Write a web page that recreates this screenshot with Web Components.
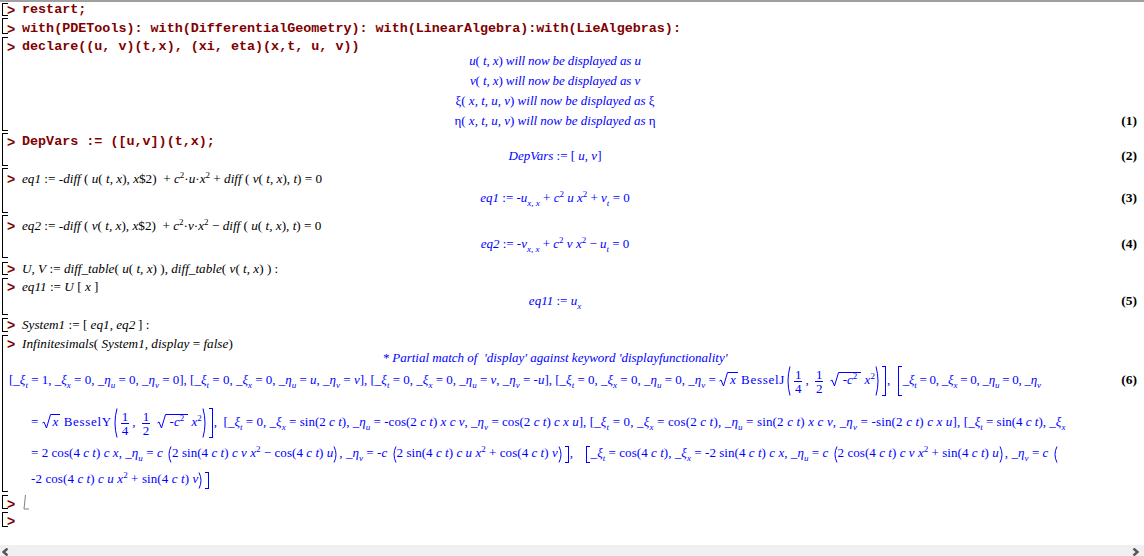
<!DOCTYPE html>
<html>
<head>
<meta charset="utf-8">
<style>
	html, body { margin: 0; height: 100%; overflow: hidden; background: #fff; }
	i { font-style: italic; }
	sub, sup { font-size: 9px; line-height: 0; }
	sub { vertical-align: -4px; }
	sup { vertical-align: 5px; }
	.fn { letter-spacing: .7px; }
</style>
</head>
<body>
<maple-sheet>
	<exec-group style="--top:1px;--h:13px;--pad:0px">
		<input-line code>restart;</input-line>
	</exec-group>
	<exec-group style="--top:2px;--h:16px;--pad:4px">
		<input-line code>with(PDETools): with(DifferentialGeometry): with(LinearAlgebra):with(LieAlgebras):</input-line>
	</exec-group>
	<exec-group style="--top:3px;--h:94px;--pad:3px">
		<input-line code>declare((u, v)(t,x), (xi, eta)(x,t, u, v))</input-line>
		<output-line style="margin-top:-3px;--ls:-.1px"><i>u</i>( <i>t, x</i>) <i>will now be displayed as u</i></output-line>
		<output-line style="--ls:-.1px"><i>v</i>( <i>t, x</i>) <i>will now be displayed as v</i></output-line>
		<output-line>ξ( <i>x, t, u, v</i>) <i>will now be displayed as</i> ξ</output-line>
		<output-line num="(1)">η( <i>x, t, u, v</i>) <i>will now be displayed as</i> η</output-line>
	</exec-group>
	<exec-group style="--top:2px;--h:33px;--pad:2px">
		<input-line code>DepVars := ([u,v])(t,x);</input-line>
		<output-line style="margin-top:-3px" num="(2)"><i>DepVars</i> := [ <i>u, v</i>]</output-line>
	</exec-group>
	<exec-group style="--top:2px;--h:45px;--pad:4px">
		<input-line><i>eq1</i> := -<i>diff</i> ( <i>u</i>( <i>t, x</i>), <i>x</i>$2) &nbsp;+ <i>c</i><sup>2</sup>·<i>u</i>·<i>x</i><sup>2</sup> + <i>diff</i> ( <i>v</i>( <i>t, x</i>), <i>t</i>) = 0</input-line>
		<output-line style="margin-top:2px" num="(3)"><i>eq1</i> := -<i>u</i><sub><i>x, x</i></sub> + <i>c</i><sup>2</sup> <i>u x</i><sup>2</sup> + <i>v</i><sub><i>t</i></sub> = 0</output-line>
	</exec-group>
	<exec-group style="--top:2px;--h:43px;--pad:4px">
		<input-line><i>eq2</i> := -<i>diff</i> ( <i>v</i>( <i>t, x</i>), <i>x</i>$2) &nbsp;+ <i>c</i><sup>2</sup>·<i>v</i>·<i>x</i><sup>2</sup> − <i>diff</i> ( <i>u</i>( <i>t, x</i>), <i>t</i>) = 0</input-line>
		<output-line style="margin-top:1px" num="(4)"><i>eq2</i> := -<i>v</i><sub><i>x, x</i></sub> + <i>c</i><sup>2</sup> <i>v x</i><sup>2</sup> − <i>u</i><sub><i>t</i></sub> = 0</output-line>
	</exec-group>
	<exec-group style="--top:4px;--h:13px;--pad:0px">
		<input-line><i>U, V</i> := <i>diff_table</i>( <i>u</i>( <i>t, x</i>) ), <i>diff_table</i>( <i>v</i>( <i>t, x</i>) ) :</input-line>
	</exec-group>
	<exec-group style="--top:3px;--h:37px;--pad:2px">
		<input-line><i>eq11</i> := <i>U</i> [ <i>x</i> ]</input-line>
		<output-line style="margin-top:-3px" num="(5)"><i>eq11</i> := <i>u</i><sub><i>x</i></sub></output-line>
	</exec-group>
	<exec-group style="--top:3px;--h:14px;--pad:0px">
		<input-line><i>System1</i> := [ <i>eq1, eq2</i>&thinsp;] :</input-line>
	</exec-group>
	<exec-group style="--top:3px;--h:157px;--pad:2px">
		<input-line><i>Infinitesimals</i>( <i>System1, display</i> = <i>false</i>)</input-line>
		<output-line style="margin-top:-3px"><i>* Partial match of &nbsp;'display' against keyword 'displayfunctionality'</i></output-line>
		<output-line wide num="(6)" style="margin-top:-3px;--row:30px;--indent:6px">[<m-sym s="ξ" i="t"></m-sym> = 1, <m-sym s="ξ" i="x"></m-sym> = 0, <m-sym s="η" i="u"></m-sym> = 0, <m-sym s="η" i="v"></m-sym> = 0], [<m-sym s="ξ" i="t"></m-sym> = 0, <m-sym s="ξ" i="x"></m-sym> = 0, <m-sym s="η" i="u"></m-sym> = <i>u</i>, <m-sym s="η" i="v"></m-sym> = <i>v</i>], [<m-sym s="ξ" i="t"></m-sym> = 0, <m-sym s="ξ" i="x"></m-sym> = 0, <m-sym s="η" i="u"></m-sym> = <i>v</i>, <m-sym s="η" i="v"></m-sym> = -<i>u</i>], [<m-sym s="ξ" i="t"></m-sym> = 0, <m-sym s="ξ" i="x"></m-sym> = 0, <m-sym s="η" i="u"></m-sym> = 0, <m-sym s="η" i="v"></m-sym> = <m-sqrt><i>x</i></m-sqrt> <span class="fn">BesselJ</span><m-paren h="30"></m-paren><m-frac a="1" b="4"></m-frac>, <m-frac a="1" b="2"></m-frac> <m-sqrt wide>-<i>c</i><sup>2</sup></m-sqrt> <i>x</i><sup>2</sup><m-paren h="30" close></m-paren><m-brack h="30" close></m-brack>, &nbsp;<m-brack h="30"></m-brack><span style="letter-spacing:-.25px"><m-sym s="ξ" i="t"></m-sym> = 0, <m-sym s="ξ" i="x"></m-sym> = 0, <m-sym s="η" i="u"></m-sym> = 0, <m-sym s="η" i="v"></m-sym></span></output-line>
		<output-line wide style="margin-top:12px;--row:30px;--indent:28px">= <m-sqrt><i>x</i></m-sqrt> <span class="fn">BesselY</span><m-paren h="30"></m-paren><m-frac a="1" b="4"></m-frac>, <m-frac a="1" b="2"></m-frac> <m-sqrt wide>-<i>c</i><sup>2</sup></m-sqrt> <i>x</i><sup>2</sup><m-paren h="30" close></m-paren><m-brack h="30" close></m-brack>, &nbsp;<span style="letter-spacing:.03px">[<m-sym s="ξ" i="t"></m-sym> = 0, <m-sym s="ξ" i="x"></m-sym> = sin(2 <i>c t</i>), <m-sym s="η" i="u"></m-sym> = -cos(2 <i>c t</i>) <i>x c v</i>, <m-sym s="η" i="v"></m-sym> = cos(2 <i>c t</i>) <i>c x u</i>], </span><span style="letter-spacing:.16px">[<m-sym s="ξ" i="t"></m-sym> = 0, <m-sym s="ξ" i="x"></m-sym> = cos(2 <i>c t</i>), <m-sym s="η" i="u"></m-sym> = sin(2 <i>c t</i>) <i>x c v</i>, <m-sym s="η" i="v"></m-sym> = -sin(2 <i>c t</i>) <i>c x u</i>], </span>[<m-sym s="ξ" i="t"></m-sym> = sin(4 <i>c t</i>), <m-sym s="ξ" i="x"></m-sym></output-line>
		<output-line wide style="margin-top:1px;--row:30px;--indent:28px"><span style="letter-spacing:.05px">= 2 cos(4 <i>c t</i>) <i>c x</i>, <m-sym s="η" i="u"></m-sym> = <i>c</i> <m-paren h="17"></m-paren>2 sin(4 <i>c t</i>) <i>c v x</i><sup>2</sup> − cos(4 <i>c t</i>) <i>u</i><m-paren h="17" close></m-paren>, <m-sym s="η" i="v"></m-sym> = -<i>c</i> <m-paren h="17"></m-paren>2 sin(4 <i>c t</i>) <i>c u x</i><sup>2</sup> + cos(4 <i>c t</i>) <i>v</i><m-paren h="17" close></m-paren><m-brack h="17" close></m-brack></span>, &nbsp;<span style="letter-spacing:.05px"><m-brack h="17" style="margin-left:6px"></m-brack><m-sym s="ξ" i="t"></m-sym> = cos(4 <i>c t</i>), <m-sym s="ξ" i="x"></m-sym> = -2 sin(4 <i>c t</i>) <i>c x</i>, <m-sym s="η" i="u"></m-sym> = <i>c</i> <m-paren h="17"></m-paren>2 cos(4 <i>c t</i>) <i>c v x</i><sup>2</sup> + sin(4 <i>c t</i>) <i>u</i><m-paren h="17" close></m-paren>, <m-sym s="η" i="v"></m-sym> = <i>c</i> <m-paren h="17"></m-paren></span></output-line>
		<output-line wide style="margin-top:-1px;--row:24px;--indent:28px;--ls:.1px">-2 cos(4 <i>c t</i>) <i>c u x</i><sup>2</sup> + sin(4 <i>c t</i>) <i>v</i><m-paren h="17" close></m-paren><m-brack h="17" close></m-brack></output-line>
	</exec-group>
	<exec-group style="--top:3px;--h:14px;--pad:2px">
		<input-line><m-cursor></m-cursor></input-line>
	</exec-group>
	<exec-group style="--top:3px;--h:15px;--pad:2px">
		<input-line></input-line>
	</exec-group>
</maple-sheet>

<script>
class MapleSheet extends HTMLElement {
	connectedCallback(){
		const shadow = this.attachShadow({ mode: 'open' })
		shadow.innerHTML = `
		<style>
			:host { display: flex; flex-direction: column; width: 1144px; height: 556px; box-sizing: border-box; border-top: 2px solid #a0a0a0; background: #fff; overflow: hidden; }
			.doc { flex: 1; min-height: 0; display: flex; flex-direction: column; padding-left: 2px; }
			.bar { flex: 0 0 11px; background: #f0f0f0; display: flex; justify-content: space-between; align-items: flex-end; padding: 0 5px 0 2px; }
			svg { display: block; }
		</style>
		<div class="doc"><slot></slot></div>
		<div class="bar">
			<svg width="7" height="8" viewBox="0 0 7 8"><path d="M5.5 .5 L1.5 4 L5.5 7.5" fill="none" stroke="#555" stroke-width="2.4"/></svg>
			<svg width="7" height="8" viewBox="0 0 7 8"><path d="M1.5 .5 L5.5 4 L1.5 7.5" fill="none" stroke="#555" stroke-width="2.4"/></svg>
		</div>`
	}
}

class ExecGroup extends HTMLElement {
	connectedCallback(){
		const shadow = this.attachShadow({ mode: 'open' })
		// the bracket is the left border plus two short ticks
		shadow.innerHTML = `
		<style>
			:host {
				display: block; box-sizing: border-box; flex: none;
				margin-top: var(--top); height: var(--h); padding-top: var(--pad);
				border-left: 1px solid #000;
				background:
					linear-gradient(#000, #000) left top / 5px 1px no-repeat,
					linear-gradient(#000, #000) left bottom / 5px 1px no-repeat;
			}
		</style>
		<slot></slot>`
	}
}

class InputLine extends HTMLElement {
	connectedCallback(){
		const code = this.hasAttribute('code')
		const shadow = this.attachShadow({ mode: 'open' })
		shadow.innerHTML = `
		<style>
			:host { display: flex; height: 14px; line-height: 14px; padding-left: 4px; white-space: nowrap; }
			.prompt { width: 15px; flex: none; font: bold 14px/14px "Liberation Sans", sans-serif; color: #800000; }
			.text { font: ${code ? 'bold 13.4px/14px "Liberation Mono", monospace' : '13.2px/14px "Liberation Serif", serif'}; color: ${code ? '#7f0000' : '#000'}; }
		</style>
		<span class="prompt">&gt;</span><span class="text"><slot></slot></span>`
	}
}

class OutputLine extends HTMLElement {
	connectedCallback(){
		const num = this.getAttribute('num') || ''
		const wide = this.hasAttribute('wide')
		const shadow = this.attachShadow({ mode: 'open' })
		shadow.innerHTML = `
		<style>
			:host { display: grid; grid-template-columns: 1104px 30px; height: var(--row, 20px); color: #00f; font: 13px/var(--row, 20px) "Liberation Serif", serif; white-space: nowrap; }
			.body { text-align: ${wide ? 'left' : 'center'}; padding-left: ${wide ? 'var(--indent, 0px)' : '0'}; letter-spacing: var(--ls, 0); }
			.num { text-align: right; font-weight: bold; color: #000; font-size: 13.5px; }
		</style>
		<div class="body"><slot></slot></div><div class="num">${num}</div>`
	}
}

// _xi with its subscript, the way the output of Infinitesimals prints it
class MSym extends HTMLElement {
	connectedCallback(){
		const shadow = this.attachShadow({ mode: 'open' })
		shadow.innerHTML = `<style>
			:host { display: inline; }
			sub { font-size: 9px; line-height: 0; vertical-align: -4px; font-style: italic; }
			i { font-style: italic; }
		</style>_<i>${this.getAttribute('s')}</i><sub>${this.getAttribute('i')}</sub>`
	}
}

class MFrac extends HTMLElement {
	connectedCallback(){
		const shadow = this.attachShadow({ mode: 'open' })
		shadow.innerHTML = `
		<style>
			:host { display: inline-flex; flex-direction: column; align-items: center; vertical-align: middle; line-height: 13px; margin: 0 3px; }
			.a { border-bottom: 1px solid #00f; padding: 0 1px; }
		</style>
		<span class="a">${this.getAttribute('a')}</span><span>${this.getAttribute('b')}</span>`
	}
}

class MSqrt extends HTMLElement {
	connectedCallback(){
		const shadow = this.attachShadow({ mode: 'open' })
		shadow.innerHTML = `
		<style>
			:host { display: inline-flex; vertical-align: -3px; line-height: 14px; height: 15px; }
			svg { flex: none; }
			.in { border-top: 1px solid #00f; padding: 0 ${this.hasAttribute('wide') ? 4 : 2}px; }
		</style>
		<svg width="9" height="15" viewBox="0 0 9 15"><path d="M.5 9 L2 8 L4.5 14 L8.5 .5 L9 .5" fill="none" stroke="#00f"/></svg><span class="in"><slot></slot></span>`
	}
}

class MParen extends HTMLElement {
	connectedCallback(){
		const h = +this.getAttribute('h')
		const d = this.hasAttribute('close') ? `M1 .5 Q5 ${h / 2} 1 ${h - .5}` : `M5 .5 Q1 ${h / 2} 5 ${h - .5}`
		const shadow = this.attachShadow({ mode: 'open' })
		shadow.innerHTML = `<style>
			:host { display: inline-block; vertical-align: middle; line-height: 0; }
			svg { display: block; }
		</style><svg width="6" height="${h}" viewBox="0 0 6 ${h}"><path d="${d}" fill="none" stroke="#00f"/></svg>`
	}
}

class MBrack extends HTMLElement {
	connectedCallback(){
		const side = this.hasAttribute('close') ? 'right' : 'left'
		const shadow = this.attachShadow({ mode: 'open' })
		shadow.innerHTML = `<style>
			:host { display: inline-block; vertical-align: middle; box-sizing: border-box; width: 4px; height: ${this.getAttribute('h')}px; border: 1px solid #00f; border-${side === 'left' ? 'right' : 'left'}: 0; margin: 0 1px; }
		</style>`
	}
}

class MCursor extends HTMLElement {
	connectedCallback(){
		const shadow = this.attachShadow({ mode: 'open' })
		shadow.innerHTML = `<style>
			:host { display: inline-block; vertical-align: top; margin: -2px 0 0 1px; }
			svg { display: block; }
		</style><svg width="7" height="15" viewBox="0 0 7 15"><path d="M2.5 0 L1 14 L6 14" fill="none" stroke="#808080"/></svg>`
	}
}

customElements.define('maple-sheet', MapleSheet)
customElements.define('exec-group', ExecGroup)
customElements.define('input-line', InputLine)
customElements.define('output-line', OutputLine)
customElements.define('m-sym', MSym)
customElements.define('m-frac', MFrac)
customElements.define('m-sqrt', MSqrt)
customElements.define('m-paren', MParen)
customElements.define('m-brack', MBrack)
customElements.define('m-cursor', MCursor)
</script>
</body>
</html>
